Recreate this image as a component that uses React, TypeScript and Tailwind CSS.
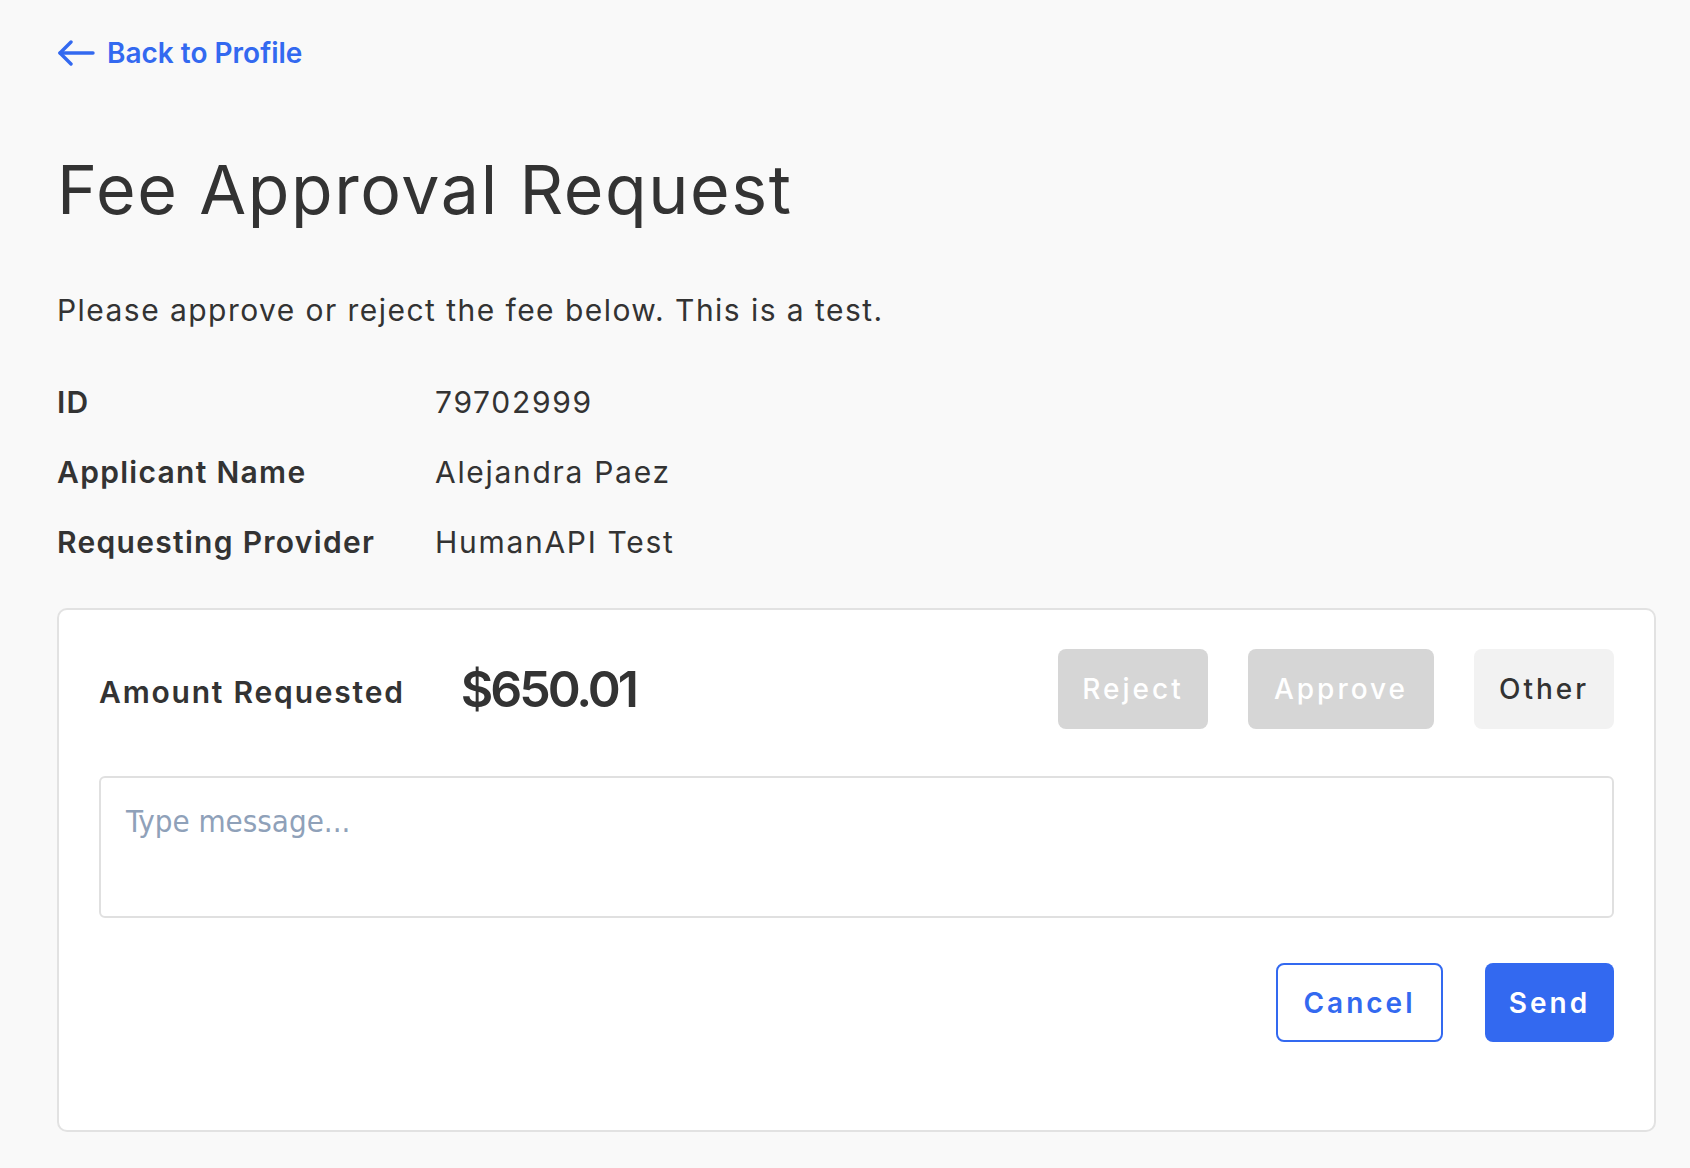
import { useState } from 'react'

const sans = "font-['Inter','Noto_Sans',sans-serif]"

interface Detail {
  label: string
  value: string
}

const details: Detail[] = [
  { label: 'ID', value: '79702999' },
  { label: 'Applicant Name', value: 'Alejandra Paez' },
  { label: 'Requesting Provider', value: 'HumanAPI Test' },
]

function ArrowLeft() {
  return (
    <svg width="38" height="26" viewBox="0 0 38 26" fill="none" stroke="currentColor" strokeWidth="3.4" strokeLinecap="round" strokeLinejoin="round">
      <path d="M36 13H3" />
      <path d="M14 2L3 13l11 11" />
    </svg>
  )
}

export default function App() {
  const [message, setMessage] = useState('')

  return (
    <div className={`min-h-screen bg-[#f9f9f9] pl-[57px] pr-[34px] pt-[36px] text-[#333333] ${sans}`}>
      <a href="#" className="flex h-[34px] items-center gap-[12px] text-[#3369f0]">
        <ArrowLeft />
        <span className="text-[28px] font-semibold leading-[34px]">Back to Profile</span>
      </a>

      <h1 className="mt-[79px] text-[68px] font-normal leading-[80px] tracking-[1.6px]">Fee Approval Request</h1>

      <p className="mt-[61px] text-[30px] leading-[40px] tracking-[1.45px]">Please approve or reject the fee below. This is a test.</p>

      <div className="mt-[37px]">
        {details.map((d) => (
          <div key={d.label} className="flex h-[70px] items-center text-[30px] leading-[70px]">
            <div className="w-[378px] font-semibold tracking-[1.3px]">{d.label}</div>
            <div className="tracking-[1.7px]">{d.value}</div>
          </div>
        ))}
      </div>

      <div className="mt-[31px] rounded-[10px] border-2 border-[#e2e2e2] bg-white px-[40px] pb-[88px] pt-[39px]">
        <div className="flex h-[80px] items-center">
          <div className="pt-[6px] text-[30px] font-semibold tracking-[1.8px]">Amount Requested</div>
          <div className="ml-[56px] text-[50px] font-semibold tracking-[-3px]">$650.01</div>
          <div className="ml-auto flex gap-[40px]">
            <button className="h-[80px] w-[150px] rounded-[8px] bg-[#d6d6d6] text-[28px] font-medium tracking-[3px] text-white">Reject</button>
            <button className="h-[80px] w-[186px] rounded-[8px] bg-[#d6d6d6] text-[28px] font-medium tracking-[3px] text-white">Approve</button>
            <button className="h-[80px] w-[140px] rounded-[8px] bg-[#f2f2f2] text-[28px] font-medium tracking-[3px] text-[#333333]">Other</button>
          </div>
        </div>

        <textarea
          value={message}
          onChange={(e) => setMessage(e.target.value)}
          placeholder="Type message..."
          className="mt-[47px] block h-[142px] w-full resize-none rounded-[6px] border-2 border-[#e0e0e0] px-[25px] pt-[25px] font-['DejaVu_Sans_Condensed','DejaVu_Sans',sans-serif] text-[31px] leading-[36px] outline-none [font-stretch:condensed] placeholder:text-[#8fa1b9]"
        />

        <div className="mt-[45px] flex justify-end gap-[42px]">
          <button className="h-[79px] w-[167px] rounded-[8px] border-2 border-[#3369f0] bg-white text-[28px] font-semibold tracking-[3px] text-[#3369f0]">Cancel</button>
          <button className="h-[79px] w-[129px] rounded-[8px] bg-[#3369f0] text-[28px] font-semibold tracking-[3px] text-white">Send</button>
        </div>
      </div>
    </div>
  )
}
